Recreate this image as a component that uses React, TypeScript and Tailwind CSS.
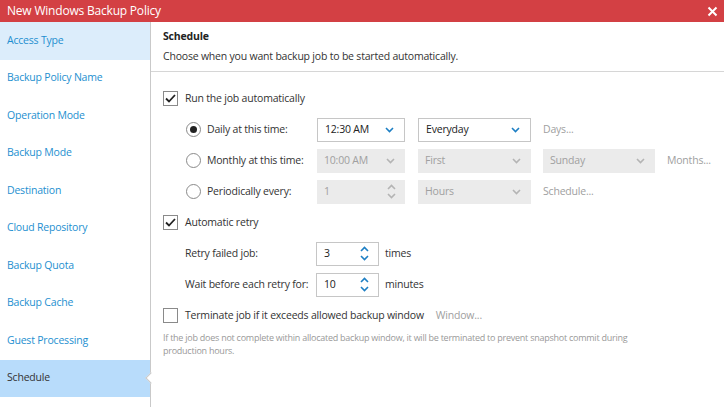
import { ReactNode } from "react";

const nav = [
  "Access Type",
  "Backup Policy Name",
  "Operation Mode",
  "Backup Mode",
  "Destination",
  "Cloud Repository",
  "Backup Quota",
  "Backup Cache",
  "Guest Processing",
  "Schedule",
];

function Chevron({ up = false, color }: { up?: boolean; color: string }) {
  return (
    <svg width="9" height="6" viewBox="0 0 9 6" className="block">
      <path
        d={up ? "M1 5 L4.5 1.5 L8 5" : "M1 1 L4.5 4.5 L8 1"}
        fill="none"
        stroke={color}
        strokeWidth="1.6"
      />
    </svg>
  );
}

function Check({ checked }: { checked: boolean }) {
  return (
    <span className="w-[15px] h-[15px] border border-[#8a8a8a] bg-white flex items-center justify-center shrink-0">
      {checked && (
        <svg width="11" height="9" viewBox="0 0 11 9">
          <path d="M1 4.5 L4 7.5 L10 1" fill="none" stroke="#222" strokeWidth="1.8" />
        </svg>
      )}
    </span>
  );
}

function Radio({ on }: { on: boolean }) {
  return (
    <span className="w-[15px] h-[15px] rounded-full border border-[#8a8a8a] bg-white flex items-center justify-center shrink-0">
      {on && <span className="w-[7px] h-[7px] rounded-full bg-[#222]" />}
    </span>
  );
}

function Select({ value, width, disabled }: { value: string; width: string; disabled?: boolean }) {
  return (
    <div
      className={`${width} h-[24px] flex items-center justify-between pl-[7px] pr-[10px] ${
        disabled ? "bg-[#ebebeb] text-[#a0a0a0]" : "bg-white border border-[#c6c6c6] text-[#222]"
      }`}
    >
      <span>{value}</span>
      <Chevron color={disabled ? "#b4b4b4" : "#1d7fc4"} />
    </div>
  );
}

function Spinner({ value, width, disabled }: { value: string; width: string; disabled?: boolean }) {
  const c = disabled ? "#b4b4b4" : "#1d7fc4";
  return (
    <div
      className={`${width} h-[24px] flex items-center justify-between pl-[7px] pr-[9px] ${
        disabled ? "bg-[#ebebeb] text-[#a0a0a0]" : "bg-white border border-[#c6c6c6] text-[#222]"
      }`}
    >
      <span>{value}</span>
      <span className="flex flex-col gap-[3px]">
        <Chevron up color={c} />
        <Chevron color={c} />
      </span>
    </div>
  );
}

function Row({ children, className = "" }: { children: ReactNode; className?: string }) {
  return <div className={`flex items-center h-[31px] whitespace-nowrap ${className}`}>{children}</div>;
}

export default function App() {
  return (
    <div
      className="w-[724px] h-[407px] flex flex-col bg-white text-[10.5px] tracking-[-0.2px] text-[#333] overflow-hidden"
      style={{ fontFamily: '"Open Sans", "Noto Sans", sans-serif' }}
    >
      <div className="h-[22px] bg-[#d34044] flex items-center justify-between pl-[7px] pr-[6px] shrink-0">
        <span className="text-white text-[12px]">New Windows Backup Policy</span>
        <svg width="11" height="11" viewBox="0 0 11 11">
          <path d="M1.5 1.5 L9.5 9.5 M9.5 1.5 L1.5 9.5" stroke="white" strokeWidth="2" />
        </svg>
      </div>
      <div className="flex flex-1 min-h-0">
        <div className="w-[151px] border-r border-[#c9c9c9] shrink-0">
          {nav.map((n, i) => (
            <div
              key={n}
              className={`relative h-[37.5px] flex items-center pl-[7px] ${
                i === 0
                  ? "bg-[#dcedfb] text-[#1e8fd0]"
                  : i === nav.length - 1
                  ? "bg-[#b8dcfb] text-[#333]"
                  : "text-[#1e8fd0]"
              }`}
            >
              {n}
              {i === nav.length - 1 && (
                <span className="absolute right-[-5px] top-1/2 -translate-y-1/2 rotate-45 w-[8px] h-[8px] bg-white border-l border-b border-[#c9c9c9]" />
              )}
            </div>
          ))}
        </div>
        <div className="flex-1 flex flex-col">
          <div className="h-[50px] border-b border-[#d6d6d6] pl-[12px] pt-[7px] shrink-0">
            <div className="font-bold text-[#222]">Schedule</div>
            <div className="mt-[4px] text-[#333]">Choose when you want backup job to be started automatically.</div>
          </div>
          <div className="pl-[12px] pt-[11px]">
            <Row>
              <Check checked />
              <span className="ml-[7px]">Run the job automatically</span>
            </Row>
            <div className="pl-[23px]">
              <Row>
                <Radio on />
                <span className="ml-[6px] w-[110px]">Daily at this time:</span>
                <Select value="12:30 AM" width="w-[88px]" />
                <span className="w-[13px]" />
                <Select value="Everyday" width="w-[113px]" />
                <span className="ml-[12px] text-[#a0a0a0]">Days...</span>
              </Row>
              <Row>
                <Radio on={false} />
                <span className="ml-[6px] w-[110px]">Monthly at this time:</span>
                <Select value="10:00 AM" width="w-[88px]" disabled />
                <span className="w-[13px]" />
                <Select value="First" width="w-[113px]" disabled />
                <span className="w-[12px]" />
                <Select value="Sunday" width="w-[112px]" disabled />
                <span className="ml-[12px] text-[#a0a0a0]">Months...</span>
              </Row>
              <Row>
                <Radio on={false} />
                <span className="ml-[6px] w-[110px]">Periodically every:</span>
                <Spinner value="1" width="w-[88px]" disabled />
                <span className="w-[13px]" />
                <Select value="Hours" width="w-[113px]" disabled />
                <span className="ml-[12px] text-[#a0a0a0]">Schedule...</span>
              </Row>
            </div>
            <Row>
              <Check checked />
              <span className="ml-[7px]">Automatic retry</span>
            </Row>
            <div className="pl-[22px]">
              <Row>
                <span className="w-[131px]">Retry failed job:</span>
                <Spinner value="3" width="w-[63px]" />
                <span className="ml-[6px]">times</span>
              </Row>
              <Row>
                <span className="w-[131px]">Wait before each retry for:</span>
                <Spinner value="10" width="w-[63px]" />
                <span className="ml-[6px]">minutes</span>
              </Row>
            </div>
            <Row>
              <Check checked={false} />
              <span className="ml-[7px]">Terminate job if it exceeds allowed backup window</span>
              <span className="ml-[12px] text-[#a0a0a0]">Window...</span>
            </Row>
            <p className="w-[480px] text-[9px] tracking-[-0.25px] leading-[13px] text-[#999]">
              If the job does not complete within allocated backup window, it will be terminated to prevent snapshot commit during production hours.
            </p>
          </div>
        </div>
      </div>
    </div>
  );
}
